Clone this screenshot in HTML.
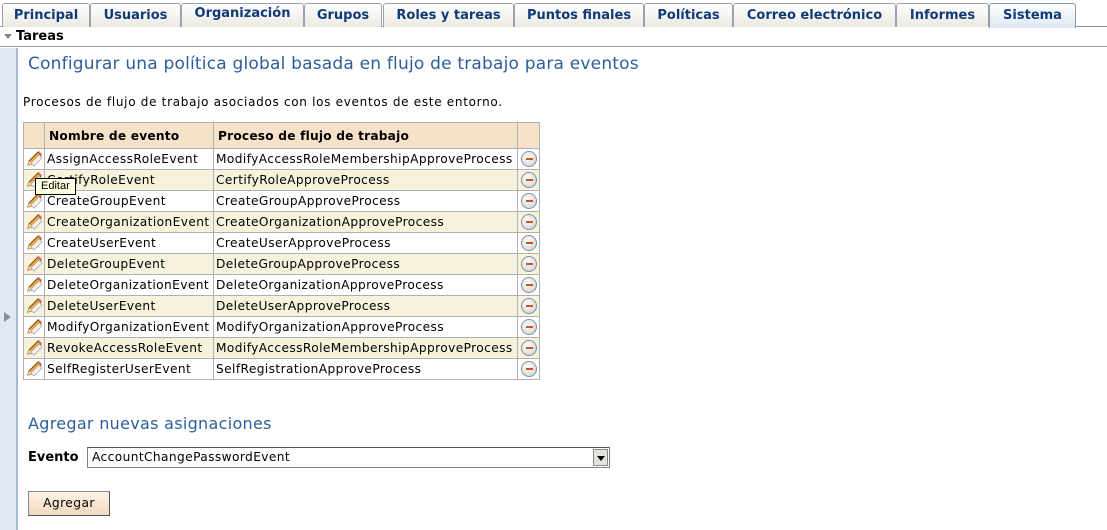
<!DOCTYPE html>
<html><head><meta charset="utf-8"><style>
*{margin:0;padding:0;box-sizing:border-box}
body{width:1107px;height:530px;overflow:hidden;background:#fff;font-family:"DejaVu Sans","Liberation Sans",sans-serif;font-size:12px;color:#000;position:relative}
.tabs{position:absolute;left:0;top:0;width:1107px;height:27px;border-bottom:1px solid #8a9aa8}
.tab{position:absolute;top:3px;height:24px;border:1px solid #9aa3ab;border-bottom:none;border-radius:3px 3px 0 0;background:linear-gradient(#fff,#ece9e2);color:#0f3a78;font-weight:bold;font-size:13px;text-align:center;line-height:24px;white-space:nowrap}
.tab.sel{background:linear-gradient(#fff,#dde8f5);height:25px;border-color:#8a9aa8}
.tareas{position:absolute;left:0;top:27px;width:1107px;height:20px;border-bottom:1px solid #9a9a9a;font-weight:bold;font-size:13px;line-height:20px;padding-left:16px}
.tareas:before{content:"";position:absolute;left:4px;top:7px;border:4px solid transparent;border-top:5px solid #888}
.side{position:absolute;left:0;top:48px;width:18px;height:482px;background:#dfe8f3;border-right:2px solid #a8bbd4}
.side:after{content:"";position:absolute;left:4px;top:264px;border:5px solid transparent;border-left:7px solid #8a8f96;border-right:none}
h1{position:absolute;left:28px;top:54px;font-size:17px;letter-spacing:0.2px;font-weight:normal;color:#2c5f9a;white-space:nowrap}
.desc{position:absolute;left:23px;top:95px;font-size:12px;letter-spacing:0.7px;white-space:nowrap}
table{position:absolute;left:23px;top:122px;border-collapse:collapse;border:1px solid #a0a0a0}
td,th{border:1px solid #b0b0b0;height:21px;padding:0 2px;white-space:nowrap;font-size:12.2px;letter-spacing:0.4px;text-align:left;font-weight:normal}
th{background:#f6e2c8;height:26px;font-weight:bold;padding-left:4px;letter-spacing:0.2px}
tr.alt td{background:#f7f2dc}
.ic{width:21px;padding:0 1px}
.del{width:22px;padding:0}
.m{display:block;width:16px;height:16px;border-radius:50%;border:1px solid #8a8f96;background:radial-gradient(circle at 40% 35%,#fff,#c8ccd2);margin:0 auto;position:relative}
.m:after{content:"";position:absolute;left:4px;top:6px;width:7px;height:2px;background:#d2521c}
h2{position:absolute;left:28px;top:414px;font-size:16px;letter-spacing:0.3px;font-weight:normal;color:#2c5f9a}
.lab{position:absolute;left:28px;top:450px;font-weight:bold;font-size:13px}
.sel2{position:absolute;left:87px;top:447px;width:523px;height:21px;border:1px solid #7f7f7f;border-top-color:#555;font-size:12.2px;letter-spacing:0.4px;line-height:19px;padding-left:4px}
.sel2 b{position:absolute;right:1px;top:1px;width:15px;height:17px;background:#e4e2dc;border:1px solid #888}
.sel2 b:after{content:"";position:absolute;left:3px;top:6px;border:4px solid transparent;border-top:5px solid #000}
.btn{position:absolute;left:28px;top:491px;width:82px;height:25px;border:1px solid #888;border-right-color:#555;border-bottom-color:#555;background:linear-gradient(#fff3e6,#f0d8c0);text-align:center;line-height:23px;font-size:12.3px;letter-spacing:0.4px}
.tip{position:absolute;left:35px;top:178px;border:1px solid #000;background:#ffffe1;font-size:11px;padding:1px 5px;line-height:13px;font-family:"Liberation Sans",sans-serif}
svg{display:block}
</style></head><body>
<svg width="0" height="0" style="position:absolute"><defs><g id="p"><path d="M3 15 L4 11 L13 2 L16 5 L7 14 Z" fill="#f0a830" stroke="#7a4a10" stroke-width="1"/><path d="M13 2 L16 5 L17 4 L14 1 Z" fill="#e87890"/><path d="M3 15 L4 11 L7 14 Z" fill="#f6e0c0"/><path d="M6 13 L14 5 L17 8 L9 16 Z" fill="#f4f0f0" stroke="#b0a8a8" stroke-width="0.8"/></g></defs></svg>
<div class="tabs">
<div class="tab" style="left:2px;width:88px">Principal</div>
<div class="tab" style="left:90px;width:91px">Usuarios</div>
<div class="tab" style="left:181px;width:123px;line-height:20px">Organización</div>
<div class="tab" style="left:304px;width:78px">Grupos</div>
<div class="tab" style="left:383px;width:131px">Roles y tareas</div>
<div class="tab" style="left:514px;width:130px">Puntos finales</div>
<div class="tab" style="left:644px;width:89px">Políticas</div>
<div class="tab" style="left:733px;width:163px">Correo electrónico</div>
<div class="tab" style="left:896px;width:93px">Informes</div>
<div class="tab sel" style="left:989px;width:87px">Sistema</div>
</div>
<div class="tareas">Tareas</div>
<div class="side"></div>
<h1>Configurar una política global basada en flujo de trabajo para eventos</h1>
<div class="desc">Procesos de flujo de trabajo asociados con los eventos de este entorno.</div>
<table>
<tr><th class="ic"></th><th style="width:169px">Nombre de evento</th><th style="width:304px">Proceso de flujo de trabajo</th><th class="del"></th></tr>
<tr><td class="ic"><svg width="18" height="18"><use href="#p"/></svg></td><td>AssignAccessRoleEvent</td><td>ModifyAccessRoleMembershipApproveProcess</td><td class="del"><span class="m"></span></td></tr>
<tr class="alt"><td class="ic"><svg width="18" height="18"><use href="#p"/></svg></td><td>CertifyRoleEvent</td><td>CertifyRoleApproveProcess</td><td class="del"><span class="m"></span></td></tr>
<tr><td class="ic"><svg width="18" height="18"><use href="#p"/></svg></td><td>CreateGroupEvent</td><td>CreateGroupApproveProcess</td><td class="del"><span class="m"></span></td></tr>
<tr class="alt"><td class="ic"><svg width="18" height="18"><use href="#p"/></svg></td><td>CreateOrganizationEvent</td><td>CreateOrganizationApproveProcess</td><td class="del"><span class="m"></span></td></tr>
<tr><td class="ic"><svg width="18" height="18"><use href="#p"/></svg></td><td>CreateUserEvent</td><td>CreateUserApproveProcess</td><td class="del"><span class="m"></span></td></tr>
<tr class="alt"><td class="ic"><svg width="18" height="18"><use href="#p"/></svg></td><td>DeleteGroupEvent</td><td>DeleteGroupApproveProcess</td><td class="del"><span class="m"></span></td></tr>
<tr><td class="ic"><svg width="18" height="18"><use href="#p"/></svg></td><td>DeleteOrganizationEvent</td><td>DeleteOrganizationApproveProcess</td><td class="del"><span class="m"></span></td></tr>
<tr class="alt"><td class="ic"><svg width="18" height="18"><use href="#p"/></svg></td><td>DeleteUserEvent</td><td>DeleteUserApproveProcess</td><td class="del"><span class="m"></span></td></tr>
<tr><td class="ic"><svg width="18" height="18"><use href="#p"/></svg></td><td>ModifyOrganizationEvent</td><td>ModifyOrganizationApproveProcess</td><td class="del"><span class="m"></span></td></tr>
<tr class="alt"><td class="ic"><svg width="18" height="18"><use href="#p"/></svg></td><td>RevokeAccessRoleEvent</td><td>ModifyAccessRoleMembershipApproveProcess</td><td class="del"><span class="m"></span></td></tr>
<tr><td class="ic"><svg width="18" height="18"><use href="#p"/></svg></td><td>SelfRegisterUserEvent</td><td>SelfRegistrationApproveProcess</td><td class="del"><span class="m"></span></td></tr>
</table>
<div class="tip">Editar</div>
<h2>Agregar nuevas asignaciones</h2>
<div class="lab">Evento</div>
<div class="sel2">AccountChangePasswordEvent<b></b></div>
<div class="btn">Agregar</div>
</body></html>
